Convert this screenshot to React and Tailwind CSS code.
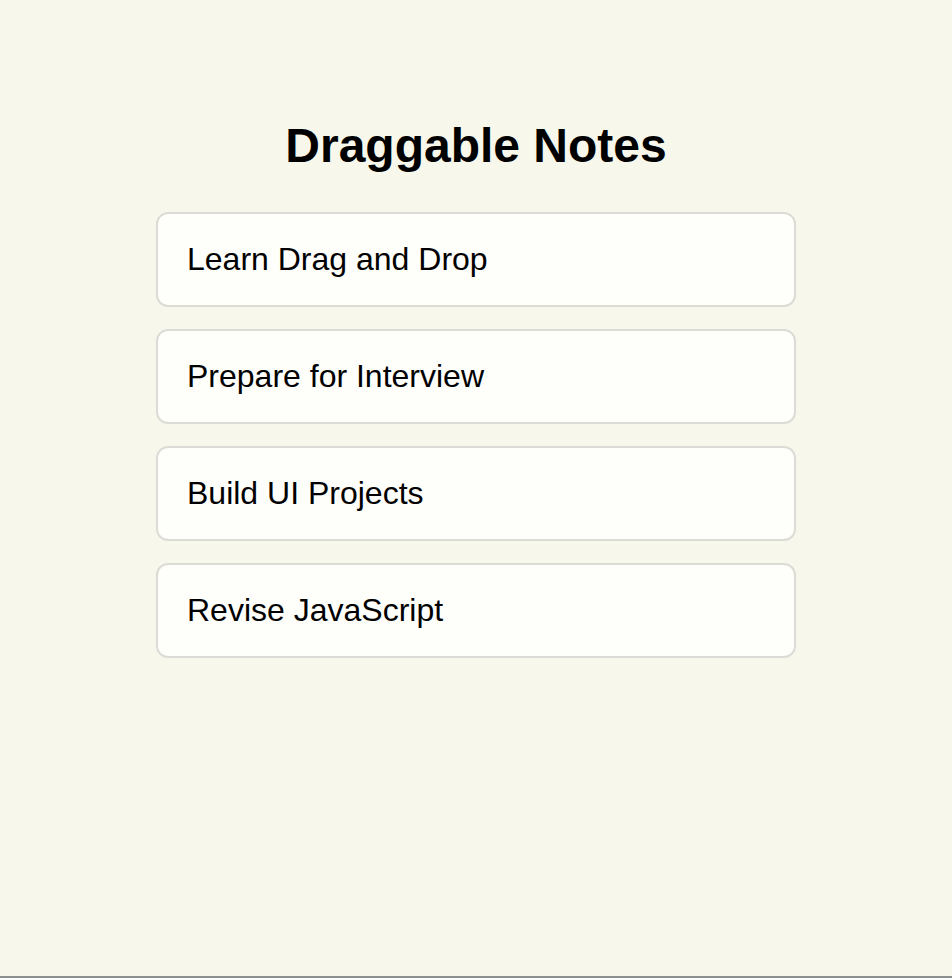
const notes = [
  'Learn Drag and Drop',
  'Prepare for Interview',
  'Build UI Projects',
  'Revise JavaScript',
];

export default function App() {
  return (
    <div
      className="min-h-[978px] bg-[#f7f7eb] border-b-2 border-[#8c9090] flex flex-col items-center pt-[118px]"
      style={{ fontFamily: '"Liberation Sans", Arial, sans-serif' }}
    >
      <h1 className="text-[48px] leading-[55px] font-bold text-black mb-[39px]">
        Draggable Notes
      </h1>

      {/* Notes list */}
      <div className="w-[640px] flex flex-col gap-[22px]">
        {notes.map((note) => (
          <div
            key={note}
            draggable
            className="bg-[#fefefa] border-2 border-[#dcdcd6] rounded-[12px] px-[29px] py-[27px] text-[32px] leading-[37px] text-black cursor-grab"
          >
            {note}
          </div>
        ))}
      </div>
    </div>
  );
}
